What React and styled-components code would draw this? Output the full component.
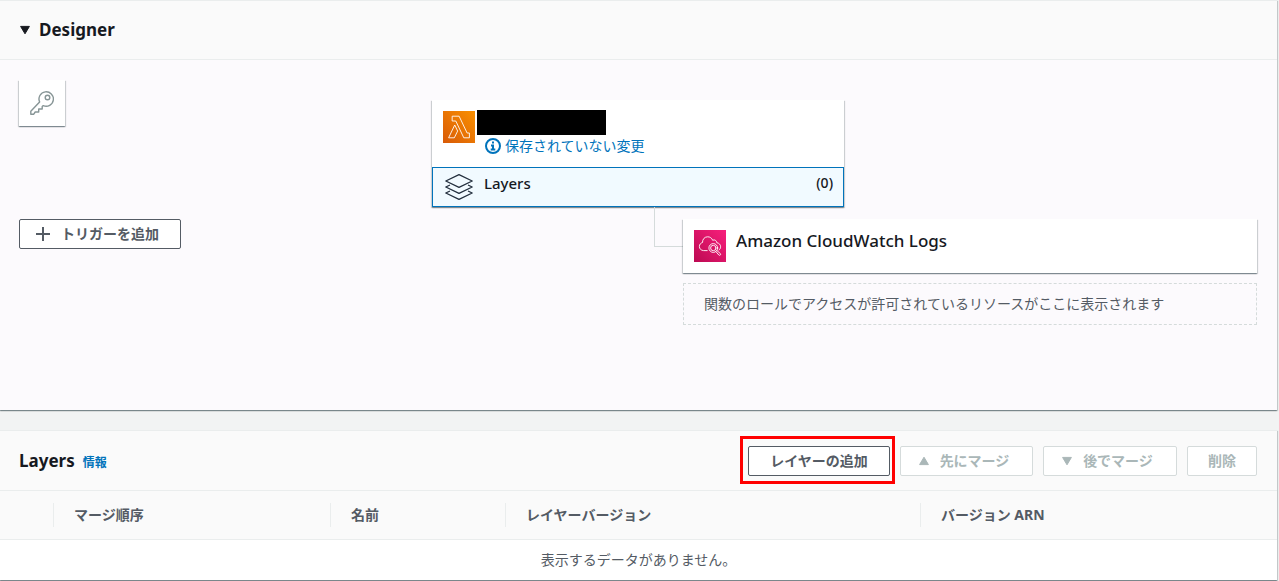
import styled, { createGlobalStyle } from "styled-components";

const GlobalStyle = createGlobalStyle`
  * {
    box-sizing: border-box;
  }
  body {
    margin: 0;
    background-color: #f2f3f3;
    color: #16191f;
    font-family: "Noto Sans", "Noto Sans CJK JP", sans-serif;
    font-size: 14px;
    line-height: 20px;
  }
  button {
    font-family: inherit;
  }
`;

const Page = styled.main`
  display: flex;
  flex-direction: column;
  gap: 20px;
  padding: 0 2px 1px 0;
`;

const cardShadow = `
  0 1px 1px 0 rgba(0, 28, 36, 0.3),
  1px 1px 1px 0 rgba(0, 28, 36, 0.15),
  -1px 1px 1px 0 rgba(0, 28, 36, 0.15)
`;

const Panel = styled.section`
  background-color: ${(props) => props.$bg || "white"};
  box-shadow: ${cardShadow};
`;

const PanelHeader = styled.header`
  display: flex;
  align-items: center;
  justify-content: space-between;
  min-height: ${(props) => (props.$tall ? 61 : 60)}px;
  padding: 0 20px 0 19px;
  background-color: #fafafa;
  border-top: 1px solid #eaeded;
  border-bottom: 1px solid #eaeded;
`;

const Heading = styled.h2`
  margin: 0;
  font-size: 17px;
  line-height: 30px;
  font-weight: 700;
`;

const Toggle = styled.button`
  display: flex;
  align-items: center;
  gap: 8px;
  padding: 0;
  border: none;
  background: none;
  color: inherit;
  font-size: 17px;
  line-height: 30px;
  font-weight: 700;
  cursor: pointer;
`;

const TitleGroup = styled.div`
  display: flex;
  align-items: baseline;
  gap: 8px;
`;

const InfoLink = styled.a`
  color: #0073bb;
  font-size: 12px;
  font-weight: 700;
  text-decoration: none;
`;

const Canvas = styled.div`
  display: grid;
  grid-template-columns: 1fr 251px 161px 1fr;
  grid-template-rows: auto 1fr;
  min-height: 350px;
  padding: 20px 20px 20px 19px;
`;

const Triggers = styled.div`
  grid-column: 1;
  grid-row: 1 / 3;
  display: flex;
  flex-direction: column;
  align-items: flex-start;
  gap: 93px;
`;

const KeyTile = styled.div`
  display: flex;
  align-items: center;
  justify-content: center;
  width: 46px;
  height: 46px;
  background-color: white;
  box-shadow: ${cardShadow};
`;

const Button = styled.button`
  display: inline-flex;
  align-items: center;
  justify-content: center;
  gap: 10px;
  min-width: ${(props) => props.$width}px;
  height: 30px;
  padding: ${(props) => (props.$icon ? "0 20px 0 14px" : "0 14px")};
  border: 1px solid #545b64;
  border-radius: 2px;
  background-color: white;
  color: #545b64;
  font-size: 14px;
  line-height: 20px;
  font-weight: 700;
  white-space: nowrap;
  cursor: pointer;
  &:disabled {
    border-color: #d5dbdb;
    color: #aab7b8;
    cursor: default;
  }
`;

const FunctionCard = styled.div`
  grid-column: 2 / 4;
  grid-row: 1;
  margin-top: 20px;
  background-color: white;
  box-shadow: ${cardShadow};
`;

const FunctionInfo = styled.div`
  display: flex;
  height: 67px;
  padding: 10px 11px 0;
  gap: 2px;
  svg {
    margin-top: 1px;
  }
`;

const MaskedName = styled.div`
  width: 129px;
  height: 25px;
  background-color: black;
`;

const Status = styled.div`
  display: flex;
  align-items: center;
  gap: 4px;
  padding-left: 8px;
  color: #0073bb;
  line-height: 22px;
  svg {
    margin: 0;
  }
`;

const LayersButton = styled.button`
  display: flex;
  gap: 11px;
  width: 100%;
  height: 40px;
  padding: 5px 10px 5px 12px;
  border: 1px solid #0073bb;
  background-color: #f1faff;
  color: #16191f;
  font-size: 15px;
  line-height: 20px;
  font-weight: 500;
  text-align: left;
  cursor: pointer;
`;

const LayersLabel = styled.span`
  flex: 1;
`;

const Count = styled.span`
  font-size: 14px;
`;

const Connector = styled.div`
  grid-column: 2;
  grid-row: 2;
  justify-self: end;
  width: 29px;
  height: 40px;
  border-left: 1px solid #d5dbdb;
  border-bottom: 1px solid #d5dbdb;
`;

const Destinations = styled.div`
  grid-column: 3 / 5;
  grid-row: 2;
  display: flex;
  flex-direction: column;
  gap: 10px;
  margin-top: 12px;
`;

const DestinationCard = styled.div`
  display: flex;
  gap: 10px;
  height: 54px;
  padding: 11px;
  background-color: white;
  box-shadow: ${cardShadow};
  font-size: 17px;
  line-height: 22px;
  font-weight: 500;
`;

const Hint = styled.p`
  margin: 0;
  padding: 10px 20px;
  border: 1px dashed #d5dbdb;
  color: #545b64;
`;

const Actions = styled.div`
  display: flex;
  gap: 10px;
`;

const Highlight = styled.div`
  position: relative;
  &::after {
    content: "";
    position: absolute;
    top: -10px;
    right: -5px;
    bottom: -8px;
    left: -8px;
    border: 3px solid #ff0000;
    pointer-events: none;
  }
`;

const Table = styled.table`
  width: 100%;
  table-layout: fixed;
  border-collapse: collapse;
  color: #545b64;
`;

const HeadCell = styled.th`
  width: ${(props) => (props.$width ? `${props.$width}px` : "auto")};
  padding: 12px 0;
  background-color: #fafafa;
  border-bottom: 1px solid #eaeded;
  text-align: left;
`;

const HeadLabel = styled.div`
  height: 24px;
  padding-left: 20px;
  border-left: 1px solid #eaeded;
  line-height: 24px;
`;

const EmptyCell = styled.td`
  height: 40px;
  padding: 0;
  text-align: center;
`;

const Triangle = ({ up }) => (
  <svg width="12" height="12" viewBox="0 0 12 12" fill="currentColor" aria-hidden="true">
    <path
      d={up ? "M6 2.2 10.4 9.6H1.6Z" : "M6 9.8 1.6 2.4H10.4Z"}
      stroke="currentColor"
      strokeLinejoin="round"
    />
  </svg>
);

const KeyIcon = () => (
  <svg width="24" height="24" viewBox="0 0 24 24" fill="none" stroke="#879596" strokeWidth="1.4" strokeLinejoin="round">
    <path d="M9.6 10.9A7.2 7.2 0 1 1 13.3 14.6L12.2 15.6V18H8.7V21H5.2L3.6 23.3H.8V20.3Z" />
    <circle cx="17.5" cy="6.5" r="2.3" />
  </svg>
);

const LambdaIcon = () => (
  <svg width="32" height="32" viewBox="0 0 80 80">
    <defs>
      <linearGradient id="lambda" x1="0" y1="1" x2="1" y2="0">
        <stop offset="0" stopColor="#d85a07" />
        <stop offset="1" stopColor="#fa9000" />
      </linearGradient>
    </defs>
    <path fill="url(#lambda)" d="M0 0H80V80H0Z" />
    <g fill="none" stroke="white" strokeWidth="2.2" strokeLinejoin="round">
      <path d="M28.3 67H14L29.3 35 36.6 50.1Z" />
      <path d="M22.9 13H40.3L60.3 55H66V67H52L32 25H22.9Z" />
    </g>
  </svg>
);

const InfoIcon = () => (
  <svg width="16" height="16" viewBox="0 0 16 16" fill="none" stroke="currentColor" strokeWidth="2">
    <circle cx="8" cy="8" r="7" />
    <path d="M8 3.6V5.6M6 7.4H8V11.4M5.7 11.4H10.3" />
  </svg>
);

const LayersIcon = () => (
  <svg width="28" height="28" viewBox="0 0 28 28" fill="none" stroke="#232f3e" strokeWidth="1.3" strokeLinejoin="round">
    <path d="M14 1.7 27.2 8 14 14.4.8 8Z" />
    <path d="M5 12 .8 14 14 20.3 27.2 14 23 12" />
    <path d="M5 18 .8 20 14 26.3 27.2 20 23 18" />
  </svg>
);

const CloudWatchIcon = () => (
  <svg width="32" height="32" viewBox="0 0 32 32">
    <defs>
      <linearGradient id="cloudwatch" x1="0" y1="1" x2="1" y2="0">
        <stop offset="0" stopColor="#bc0a52" />
        <stop offset="1" stopColor="#f81f7c" />
      </linearGradient>
    </defs>
    <path fill="url(#cloudwatch)" d="M0 0H32V32H0Z" />
    <g fill="none" stroke="white" strokeWidth="0.9" strokeLinecap="round" strokeLinejoin="round">
      <path d="M13.2 20.6H9.6C7 20.4 5.4 18.8 5.4 16.5 5.4 14.4 6.6 13.1 8.5 12.5 8.4 9.3 10.6 6.8 13.6 6.8 16 6.8 17.8 8 18.7 10.3 20.6 9.2 22.6 10.4 22.8 12.7 25.2 13.2 26.6 14.6 26.6 16.8 26.6 18.2 26 19.4 25 20" />
      <circle cx="19.3" cy="18" r="4.4" />
      <circle cx="19.3" cy="18" r="2.7" />
      <path d="M22.9 20.6 26.3 23.5C27.3 24.6 25.8 26 24.8 25L21.9 21.6" />
    </g>
  </svg>
);

const PlusIcon = () => (
  <svg width="16" height="16" viewBox="0 0 16 16" stroke="currentColor" strokeWidth="2">
    <path d="M8 1V15M1 8H15" />
  </svg>
);

const columns = [
  { label: "マージ順序", width: 277 },
  { label: "名前", width: 175 },
  { label: "レイヤーバージョン", width: 415 },
  { label: "バージョン ARN" },
];

const Designer = () => {
  return (
    <Panel $bg="#fcfafd">
      <PanelHeader>
        <Heading>
          <Toggle type="button" aria-expanded="true">
            <Triangle />
            Designer
          </Toggle>
        </Heading>
      </PanelHeader>
      <Canvas>
        <Triggers>
          <KeyTile>
            <KeyIcon />
          </KeyTile>
          <Button type="button" $icon $width={162}>
            <PlusIcon />
            トリガーを追加
          </Button>
        </Triggers>
        <FunctionCard>
          <FunctionInfo>
            <LambdaIcon />
            <div>
              <MaskedName />
              <Status>
                <InfoIcon />
                保存されていない変更
              </Status>
            </div>
          </FunctionInfo>
          <LayersButton type="button">
            <LayersIcon />
            <LayersLabel>Layers</LayersLabel>
            <Count>(0)</Count>
          </LayersButton>
        </FunctionCard>
        <Connector />
        <Destinations>
          <DestinationCard>
            <CloudWatchIcon />
            Amazon CloudWatch Logs
          </DestinationCard>
          <Hint>関数のロールでアクセスが許可されているリソースがここに表示されます</Hint>
        </Destinations>
      </Canvas>
    </Panel>
  );
};

const Layers = () => {
  return (
    <Panel>
      <PanelHeader $tall>
        <TitleGroup>
          <Heading>Layers</Heading>
          <InfoLink href="#info">情報</InfoLink>
        </TitleGroup>
        <Actions>
          <Highlight>
            <Button type="button" $width={142}>レイヤーの追加</Button>
          </Highlight>
          <Button type="button" $icon $width={133} disabled>
            <Triangle up />
            先にマージ
          </Button>
          <Button type="button" $icon $width={134} disabled>
            <Triangle />
            後でマージ
          </Button>
          <Button type="button" $width={70} disabled>削除</Button>
        </Actions>
      </PanelHeader>
      <Table>
        <thead>
          <tr>
            <HeadCell $width={53} />
            {columns.map((column) => (
              <HeadCell key={column.label} $width={column.width} scope="col">
                <HeadLabel>{column.label}</HeadLabel>
              </HeadCell>
            ))}
          </tr>
        </thead>
        <tbody>
          <tr>
            <EmptyCell colSpan={5}>表示するデータがありません。</EmptyCell>
          </tr>
        </tbody>
      </Table>
    </Panel>
  );
};

const App = () => {
  return (
    <>
      <GlobalStyle />
      <Page>
        <Designer />
        <Layers />
      </Page>
    </>
  );
};

export default App;
